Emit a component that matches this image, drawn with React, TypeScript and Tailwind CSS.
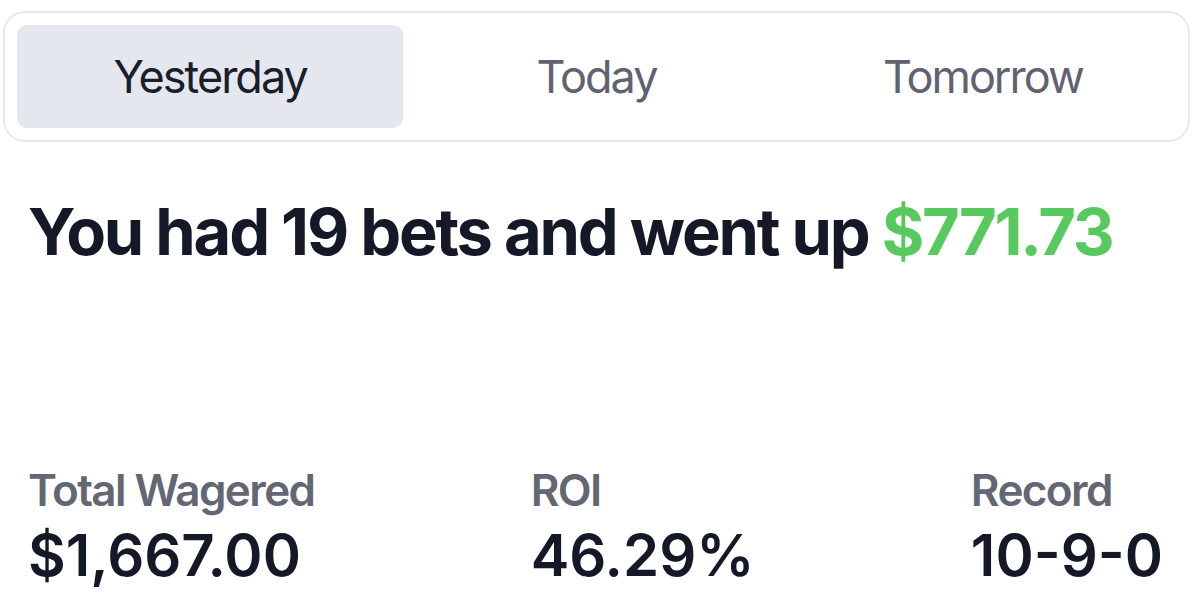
import React, { useState } from "react";

const tabs = ["Yesterday", "Today", "Tomorrow"];

const stats = [
  { label: "Total Wagered", value: "$1,667.00" },
  { label: "ROI", value: "46.29%" },
  { label: "Record", value: "10-9-0" },
];

export default function App() {
  const [active, setActive] = useState(0);

  return (
    <div
      className="w-[1200px] h-[593px] overflow-hidden bg-white"
      style={{ fontFamily: "Inter, 'Noto Sans', sans-serif" }}
    >
      <div className="ml-[3px] mt-[11px] w-[1187px] h-[131px] rounded-[22px] border-2 border-[#e6e8ec] p-[12px] grid grid-cols-3">
        {tabs.map((t, i) => (
          <button
            key={t}
            onClick={() => setActive(i)}
            className={
              i === active
                ? "rounded-[10px] bg-[#e4e7ed] text-[45px] text-[#1a1d2b] tracking-[-2px]"
                : "rounded-[10px] text-[45px] text-[#5f636f] tracking-[-2px]"
            }
          >
            {t}
          </button>
        ))}
      </div>

      <h1 className="mt-[57px] pl-[28px] text-[65px] leading-none font-bold text-[#141827] tracking-[-2.2px]">
        You had 19 bets and went up{" "}
        <span className="text-[#57c95e]">$771.73</span>
      </h1>

      <div className="mt-[204px] flex justify-between pl-[28px] pr-[37px]">
        {stats.map((s) => (
          <div key={s.label} className="flex flex-col">
            <span className="text-[44px] leading-none font-semibold text-[#636773] tracking-[-1.6px]">
              {s.label}
            </span>
            <span className="mt-[14px] text-[58px] leading-none font-semibold text-[#141827] tracking-[0px]">
              {s.value}
            </span>
          </div>
        ))}
      </div>
    </div>
  );
}
